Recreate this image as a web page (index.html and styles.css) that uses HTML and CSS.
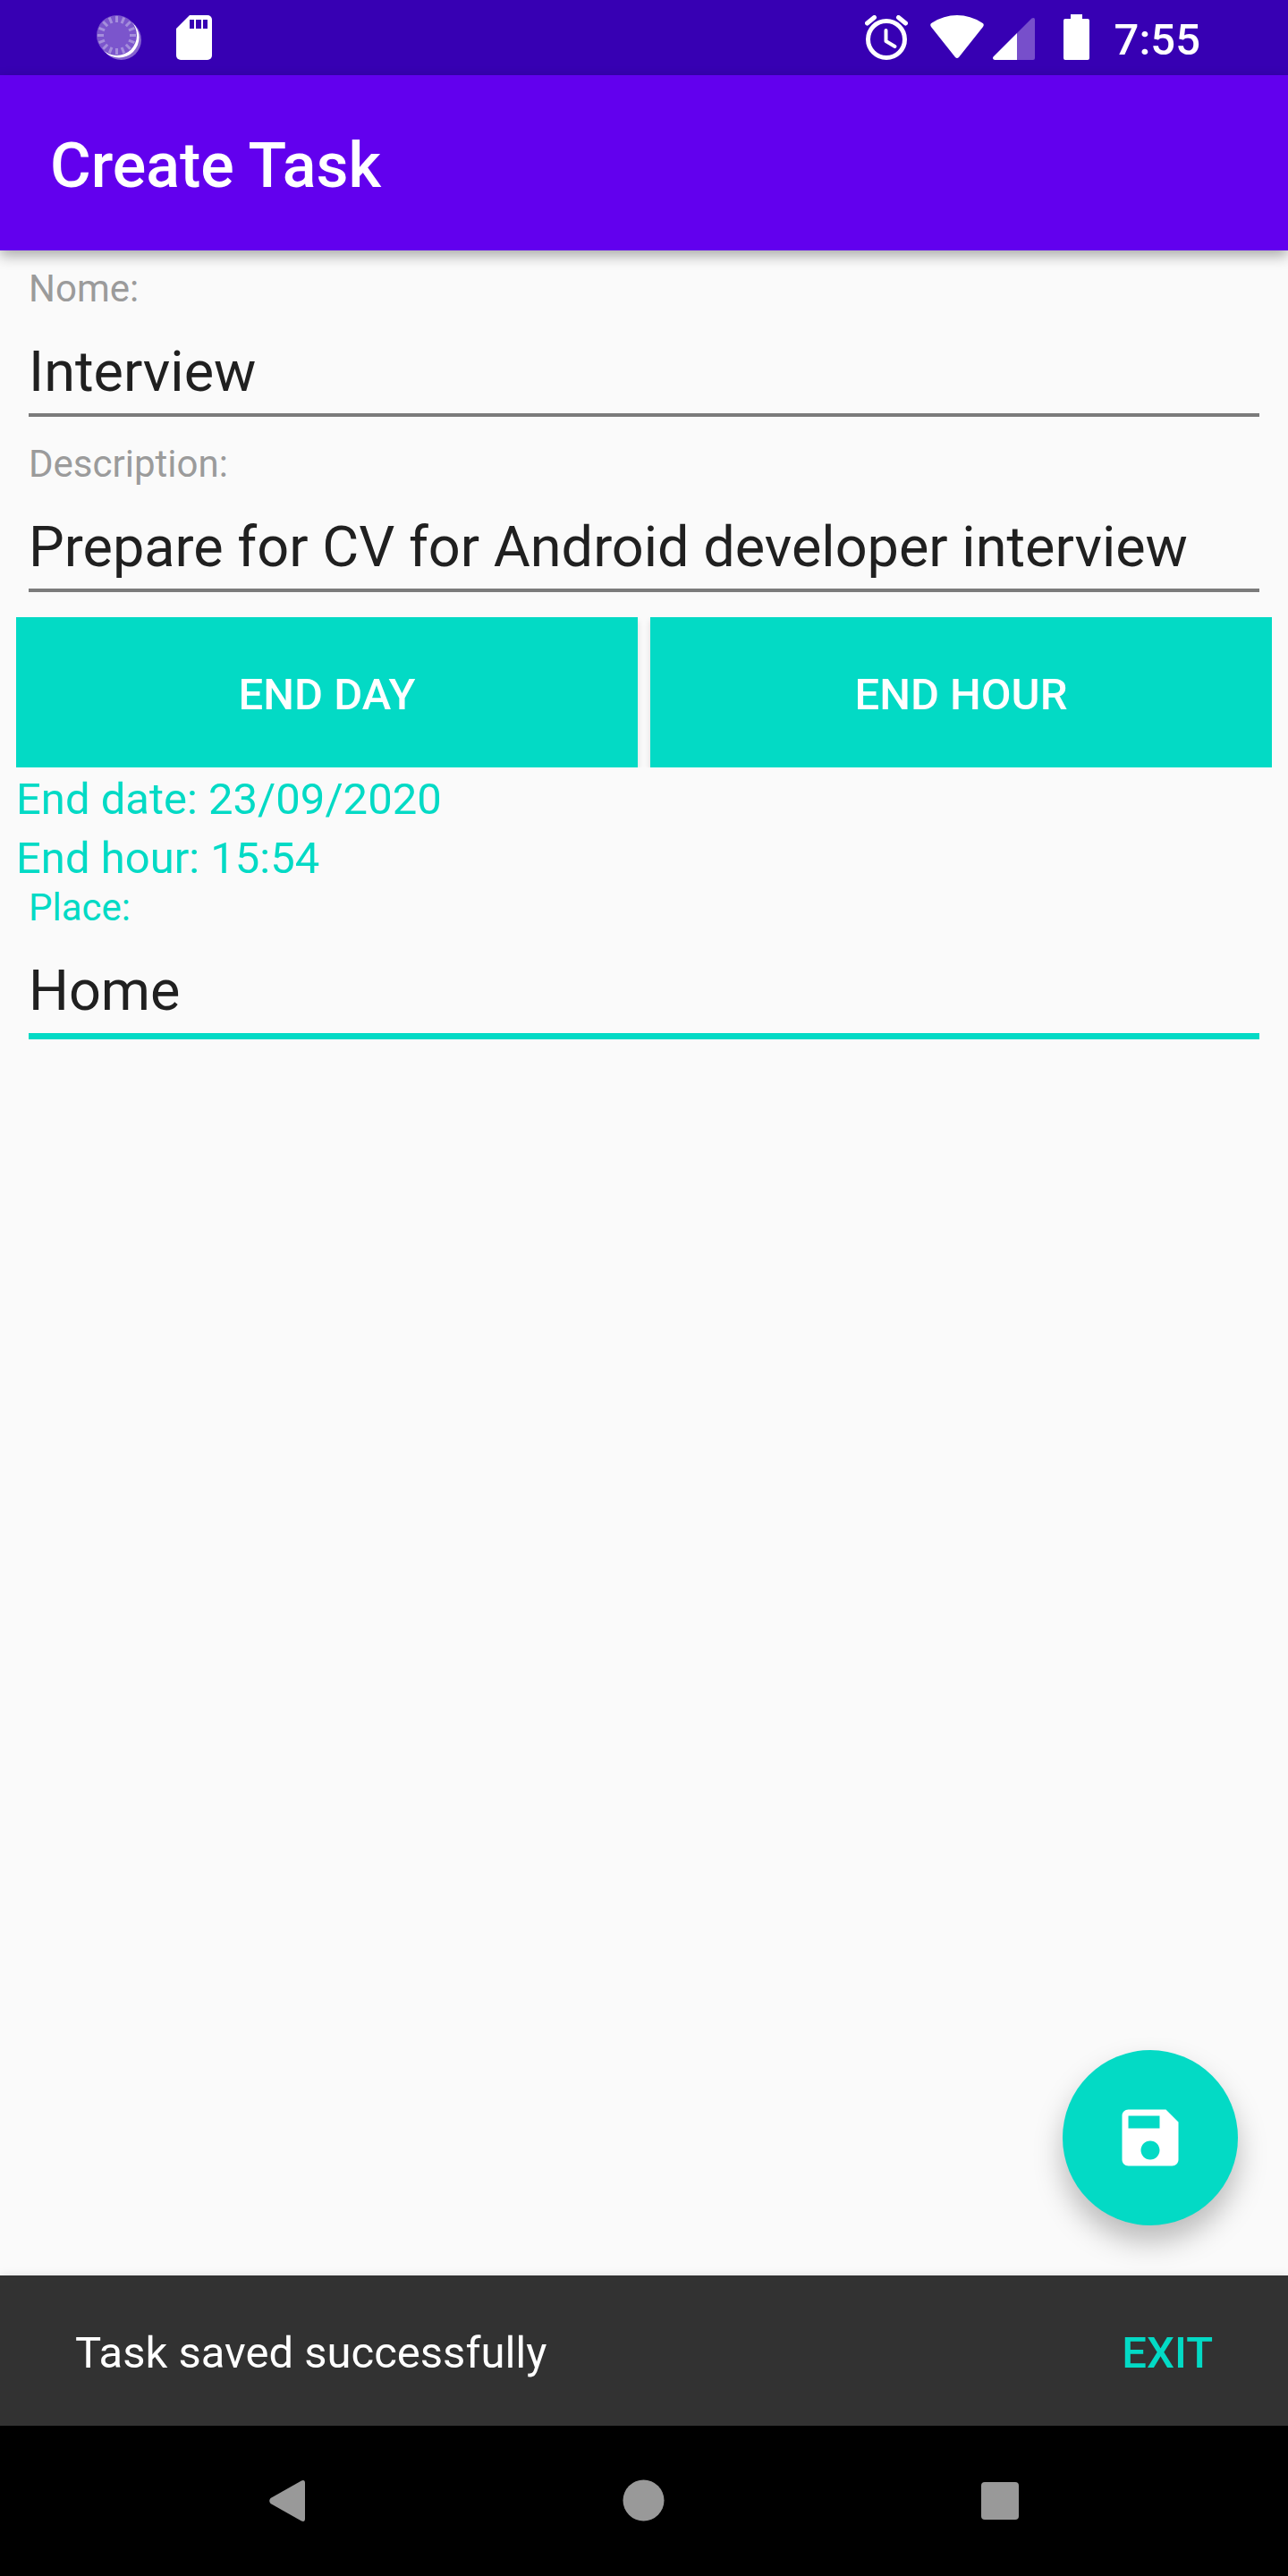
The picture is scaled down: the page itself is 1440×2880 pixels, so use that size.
FILE: index.html
```html
<!DOCTYPE html>
<html lang="en">
<head>
  <meta charset="utf-8">
  <meta name="viewport" content="width=device-width, initial-scale=1">
  <title>Create Task</title>
  <link rel="stylesheet" href="styles.css">
</head>
<body>
  <div class="screen">
    <div class="status-bar">
      <div class="status-group status-left">
        <svg width="50" height="50" viewBox="0 0 50 50" aria-hidden="true">
          <circle cx="27.5" cy="27.5" r="22.5" fill="#8664d0"/>
          <circle cx="25" cy="25" r="22.5" fill="#fff"/>
          <circle cx="22.5" cy="22.5" r="22.5" fill="#7b55cc"/>
          <g stroke="#a58edc" stroke-width="3">
            <path id="rays" d="M37 22.5h7M1 22.5h7M22.5 37v7M22.5 1v7M32.8 32.8l4.9 4.9M12.2 12.2l-4.9-4.9M32.8 12.2l4.9-4.9M12.2 32.8l-4.9 4.9"/>
            <use href="#rays" transform="rotate(22.5 22.5 22.5)"/>
          </g>
        </svg>
        <svg width="40" height="50" viewBox="0 0 40 50" aria-hidden="true">
          <path fill="#fff" d="M15 0h20a5 5 0 0 1 5 5v40a5 5 0 0 1-5 5H5a5 5 0 0 1-5-5V15z"/>
          <path fill="#3700b3" d="M15 5h5v10h-5zM22 5h6v10h-6zM30 5h5v10h-5z"/>
        </svg>
      </div>
      <div class="status-group status-right">
        <svg width="48" height="50" viewBox="0 0 48 50" aria-hidden="true">
          <g fill="none" stroke="#fff" stroke-linecap="round">
            <circle cx="24" cy="27" r="20.5" stroke-width="5"/>
            <path stroke-width="4" stroke-linejoin="round" d="M23.5 17v12l10 6"/>
            <path stroke-width="5" d="M2.500 9l8-6.500M45.500 9l-8-6.500"/>
          </g>
        </svg>
        <svg class="wifi" width="60" height="50" viewBox="0 0 60 50" aria-hidden="true">
          <path fill="#fff" d="M1 13Q-1 10 2 8.500Q15 0 30 0T58 8.500Q61 10 59 13L32 47Q30 49 28 47z"/>
        </svg>
        <svg class="signal" width="48" height="50" viewBox="0 0 48 50" aria-hidden="true">
          <path fill="#774fcb" d="M27 20L43.500 3.500Q47 2 47 5V48a2 2 0 0 1-2 2H27z"/>
          <path fill="#fff" d="M27 20V50H2Q-1 49 .5 46.500z"/>
        </svg>
        <svg class="battery" width="29" height="52" viewBox="0 0 29 52" aria-hidden="true">
          <path fill="#fff" d="M8 0h13v5h6a2 2 0 0 1 2 2v42a2 2 0 0 1-2 2H2a2 2 0 0 1-2-2V7a2 2 0 0 1 2-2h6z"/>
        </svg>
        <time class="clock">7:55</time>
      </div>
    </div>

    <header class="app-bar">
      <h1 class="app-title">Create Task</h1>
    </header>

    <main class="content">
      <form class="task-form">
        <div class="field">
          <label class="field-label" for="name">Nome:</label>
          <input class="field-input" id="name" type="text" value="Interview">
        </div>
        <div class="field">
          <label class="field-label" for="description">Description:</label>
          <input class="field-input" id="description" type="text" value="Prepare for CV for Android developer interview">
        </div>
        <div class="picker-row">
          <button class="picker-button" type="button">END DAY</button>
          <button class="picker-button" type="button">END HOUR</button>
        </div>
        <div class="deadline">
          <p class="deadline-line">End date: 23/09/2020</p>
          <p class="deadline-line">End hour: 15:54</p>
        </div>
        <div class="field field-active">
          <label class="field-label" for="place">Place:</label>
          <input class="field-input" id="place" type="text" value="Home">
        </div>
      </form>
      <button class="fab" type="button" aria-label="Save task">
        <svg width="84" height="84" viewBox="0 0 24 24" aria-hidden="true">
          <path fill="#fff" d="M17 3H5c-1.110 0-2 .9-2 2v14c0 1.100.89 2 2 2h14c1.100 0 2-.9 2-2V7l-4-4zm-5 16c-1.660 0-3-1.340-3-3s1.340-3 3-3 3 1.340 3 3-1.340 3-3 3zm3-10H5V5h10v4z"/>
        </svg>
      </button>
    </main>

    <div class="snackbar" role="status">
      <span>Task saved successfully</span>
      <button class="snackbar-action" type="button">EXIT</button>
    </div>

    <nav class="nav-bar" aria-label="System navigation">
      <button class="nav-button" type="button" aria-label="Back">
        <svg width="48" height="48" viewBox="0 0 48 48" aria-hidden="true">
          <path fill="#999" d="M39 1.500Q43 0 43 4V44Q43 48 39 46.500L4.500 27Q2 24 4.500 21z"/>
        </svg>
      </button>
      <button class="nav-button" type="button" aria-label="Home">
        <svg width="48" height="48" viewBox="0 0 48 48" aria-hidden="true">
          <circle cx="23.500" cy="23.500" r="23" fill="#999"/>
        </svg>
      </button>
      <button class="nav-button" type="button" aria-label="Recent apps">
        <svg width="48" height="48" viewBox="0 0 48 48" aria-hidden="true">
          <rect x="3" y="3" width="42" height="42" rx="4" fill="#999"/>
        </svg>
      </button>
    </nav>
  </div>
</body>
</html>
```
FILE: styles.css
```css
* {
  box-sizing: border-box;
}

body {
  margin: 0;
  background: #fafafa;
  color: #202020;
  font-family: Roboto, sans-serif;
  font-size: 49px;
  line-height: 58px;
}

button,
input {
  margin: 0;
  padding: 0;
  border: 0;
  border-radius: 0;
  background: none;
  font: inherit;
  outline: none;
}

svg {
  display: block;
  flex: none;
}

.screen {
  display: flex;
  flex-direction: column;
  min-height: 100vh;
}

/* Status bar */

.status-bar {
  display: flex;
  align-items: center;
  justify-content: space-between;
  height: 84px;
  padding: 0 98px 0 108px;
  background: #3700b3;
  color: #fff;
}

.status-group {
  display: flex;
  align-items: center;
}

.status-left {
  gap: 39px;
}

.wifi {
  margin-left: 25px;
}

.signal {
  margin-left: 10px;
}

.battery {
  margin-left: 31px;
}

.clock {
  margin-left: 28px;
  padding-top: 5px;
  font-weight: 500;
}

/* App bar */

.app-bar {
  position: relative;
  display: flex;
  align-items: center;
  height: 196px;
  padding: 6px 56px 0;
  background: #6200ee;
  box-shadow: 0 6px 14px rgba(0, 0, 0, 0.32);
}

.app-title {
  margin: 0;
  color: #fff;
  font-size: 70px;
  font-weight: 500;
  line-height: 82px;
}

/* Form */

.content {
  position: relative;
  flex: 1;
}

.task-form {
  padding: 18px 18px 0;
}

.field {
  display: flex;
  flex-direction: column;
  gap: 30px;
  padding: 0 14px 28px;
}

.field-label {
  color: #9b9b9b;
  font-size: 42px;
  line-height: 50px;
}

.field-input {
  width: 100%;
  height: 88px;
  padding-bottom: 10px;
  border-bottom: 4px solid #7b7b7b;
  color: #202020;
  font-size: 63px;
  line-height: 74px;
}

.field-active .field-label {
  color: #03dac5;
}

.field-active .field-input {
  height: 92px;
  padding-bottom: 11px;
  border-bottom: 7px solid #03dac5;
}

.picker-row {
  display: flex;
  gap: 14px;
  overflow: hidden;
}

.picker-button {
  flex: 1;
  height: 168px;
  padding-top: 6px;
  background: #03dac5;
  box-shadow: 0 4px 7px rgba(0, 0, 0, 0.12);
  color: #fff;
  font-weight: 500;
}

.deadline {
  display: flex;
  flex-direction: column;
  gap: 8px;
  padding: 7px 0 1px;
  color: #03dac5;
}

.deadline-line {
  margin: 0;
}

.fab {
  position: absolute;
  right: 56px;
  bottom: 56px;
  display: flex;
  align-items: center;
  justify-content: center;
  width: 196px;
  height: 196px;
  border-radius: 50%;
  background: #03dac5;
  box-shadow: 0 18px 32px rgba(0, 0, 0, 0.26);
}

/* Snackbar */

.snackbar {
  position: relative;
  display: flex;
  align-items: center;
  justify-content: space-between;
  height: 168px;
  padding: 6px 84px 0;
  background: #323232;
  box-shadow: 0 0 10px rgba(0, 0, 0, 0.1);
  color: #fff;
}

.snackbar-action {
  color: #03dac5;
  font-weight: 500;
}

/* System navigation */

.nav-bar {
  position: relative;
  display: flex;
  height: 168px;
  padding: 0 123px;
  background: #000;
}

.nav-button {
  display: flex;
  flex: 1;
  align-items: center;
  justify-content: center;
}
```
